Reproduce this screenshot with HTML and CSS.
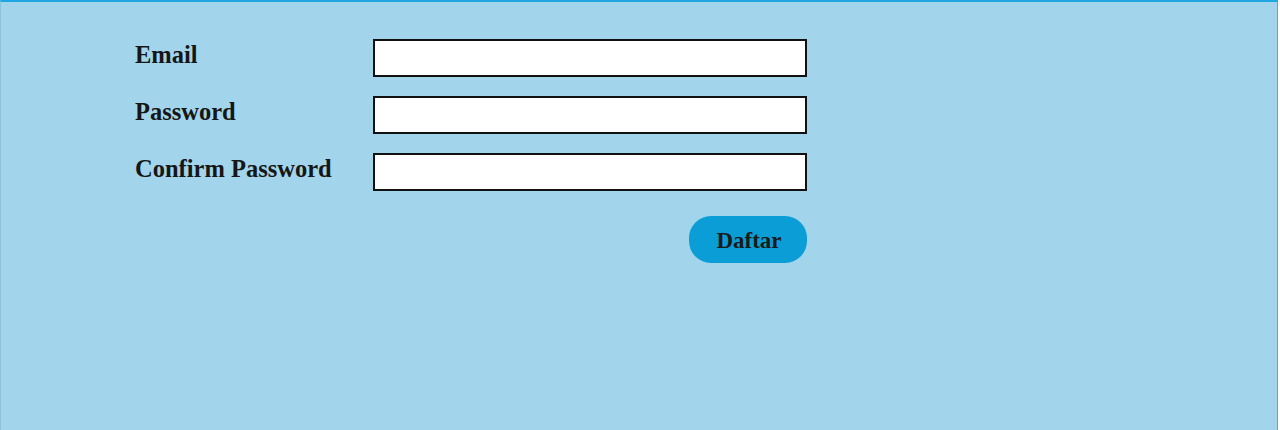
FILE: index.html
```html
<!DOCTYPE html>
<html lang="id">
<head>
<meta charset="utf-8">
<title>Daftar</title>
<link rel="stylesheet" href="styles.css">
</head>
<body>
<div class="frame">
  <form class="form">
    <label class="label" for="email">Email</label>
    <input class="field" id="email" type="email">
    <label class="label" for="pw">Password</label>
    <input class="field" id="pw" type="password">
    <label class="label" for="pw2">Confirm Password</label>
    <input class="field" id="pw2" type="password">
    <div class="actions">
      <button class="btn" type="button">Daftar</button>
    </div>
  </form>
</div>
</body>
</html>
```

FILE: styles.css
```css
html, body {
  margin: 0;
  padding: 0;
  background: #ffffff;
}
.frame {
  box-sizing: border-box;
  width: 1278px;
  height: 430px;
  background: #a2d5ec;
  border-top: 2px solid #1ea6e0;
  border-left: 1px solid #8cc3dc;
  border-right: 1px solid #7c9ea8;
  padding: 37px 0 0 134px;
  font-family: "Liberation Serif", "Times New Roman", serif;
}
.form {
  display: grid;
  grid-template-columns: 238px 434px;
  row-gap: 19px;
  align-items: center;
}
.label {
  font-size: 24.5px;
  font-weight: bold;
  color: #161616;
  padding-bottom: 7px;
  white-space: nowrap;
}
.field {
  box-sizing: border-box;
  width: 434px;
  height: 38px;
  margin: 0;
  border: 2px solid #111111;
  background: #ffffff;
  outline: none;
}
.actions {
  grid-column: 2;
  display: flex;
  justify-content: flex-end;
  padding-top: 6px;
}
.btn {
  box-sizing: border-box;
  width: 118px;
  height: 47px;
  border: none;
  border-radius: 22px;
  background: #0b9dd6;
  color: #1a1a1a;
  font-family: "Liberation Serif", "Times New Roman", serif;
  font-size: 23px;
  font-weight: bold;
  padding: 2px 0 0 2px;
}
```
